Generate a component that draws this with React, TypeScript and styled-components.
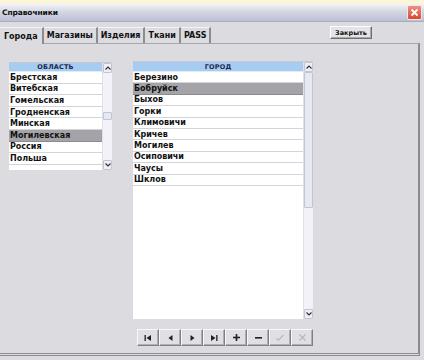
import React, { useState } from 'react'
import styled, { createGlobalStyle } from 'styled-components'

const GlobalStyle = createGlobalStyle`
    html, body {
        margin: 0;
        padding: 0;
        background: #dcdce0;
    }
    * {
        box-sizing: border-box;
    }
`

const regions = ['Брестская', 'Витебская', 'Гомельская', 'Гродненская', 'Минская', 'Могилевская', 'Россия', 'Польша']
const cities = ['Березино', 'Бобруйск', 'Быхов', 'Горки', 'Климовичи', 'Кричев', 'Могилев', 'Осиповичи', 'Чаусы', 'Шклов']
const tabs = ['Города', 'Магазины', 'Изделия', 'Ткани', 'PASS']

const font = `"DejaVu Sans", Verdana, sans-serif`

const Window = styled.div`
    width: 424px;
    height: 360px;
    overflow: hidden;
    background: #dcdce0;
    font-family: ${font};
    display: flex;
    flex-direction: column;
`

const TopStrip = styled.div`
    height: 4px;
    background: #fbf6da;
`

const TitleBar = styled.div`
    height: 18px;
    display: flex;
    align-items: center;
    justify-content: space-between;
    padding: 0 2px 0 2px;
    background: linear-gradient(to bottom, #f4f4f8 0%, #d4d6e2 45%, #bcc0d4 100%);
    border-bottom: 1px solid #a8acbc;
`

const Title = styled.span`
    font-size: 7.5px;
    font-weight: bold;
    color: #101010;
    letter-spacing: -0.1px;
`

const CloseX = styled.div`
    width: 15px;
    height: 15px;
    border-radius: 2px;
    background: linear-gradient(to bottom, #f09080, #d84830);
    border: 1px solid #f0e8e8;
    display: flex;
    align-items: center;
    justify-content: center;
`

const TabBar = styled.div`
    display: flex;
    align-items: flex-end;
    justify-content: space-between;
    height: 21px;
    padding-right: 52px;
`

const Tabs = styled.div`
    display: flex;
    align-items: flex-end;
    height: 100%;
`

const Tab = styled.div<{ $active?: boolean }>`
    height: ${p => (p.$active ? 17 : 16)}px;
    padding: 0 ${p => (p.$active ? 4 : 3)}px;
    font-size: 8px;
    font-weight: bold;
    color: #111;
    display: flex;
    align-items: center;
    background: #dcdce0;
    border-right: 2px solid #8c8c90;
    border-top: 1px solid #f4f4f4;
    ${p => p.$active ? 'margin-bottom: -1px; position: relative; z-index: 1;' : ''}
`

const CloseButton = styled.button`
    width: 42px;
    height: 13px;
    margin-bottom: 4px;
    padding: 0;
    font-family: ${font};
    font-size: 6.5px;
    font-weight: bold;
    color: #111;
    background: #e4e4e8;
    border: 1px solid;
    border-color: #ffffff #707074 #707074 #ffffff;
    box-shadow: inset -1px -1px 0 #a8a8ac;
`

const Panel = styled.div`
    width: 420px;
    height: 313px;
    border-top: 1px solid #a8a8ac;
    border-right: 2px solid #8c8c90;
    border-bottom: 3px double #8c8c90;
    padding: 17px 0 0 9px;
    display: flex;
    align-items: flex-start;
    gap: 21px;
`

const LeftCol = styled.div`
    margin-top: 1px;
`

const RightCol = styled.div`
    display: flex;
    flex-direction: column;
    gap: 10px;
`

const ListBox = styled.div<{ $w: number; $h: number }>`
    width: ${p => p.$w}px;
    height: ${p => p.$h}px;
    background: #ffffff;
    display: flex;
    border-top: 1px solid #c8c8cc;
`

const Rows = styled.div`
    flex: 1;
    display: flex;
    flex-direction: column;
`

const Header = styled.div<{ $h: number }>`
    height: ${p => p.$h}px;
    background: #a6ccf2;
    border-bottom: 1px solid #e0ecf8;
    font-size: 6.5px;
    font-weight: bold;
    color: #1c2850;
    display: flex;
    align-items: center;
    justify-content: center;
    letter-spacing: 0.2px;
`

const Row = styled.div<{ $selected?: boolean; $h: number }>`
    height: ${p => p.$h}px;
    padding-left: 1px;
    font-size: 8px;
    font-weight: bold;
    color: #111;
    display: flex;
    align-items: center;
    background: ${p => (p.$selected ? '#a4a4a8' : '#ffffff')};
    border-bottom: 1px solid ${p => (p.$selected ? '#8c8c90' : '#d4d4d8')};
`

const ScrollBar = styled.div`
    width: 10px;
    display: flex;
    flex-direction: column;
    background: #f2f2f8;
    border-left: 1px solid #e0e0e8;
`

const ArrowBox = styled.div`
    height: 10px;
    display: flex;
    align-items: center;
    justify-content: center;
    background: #eeeef4;
    border: 1px solid #c4c4cc;
    border-radius: 1px;
`

const Track = styled.div`
    flex: 1;
    display: flex;
    flex-direction: column;
`

const Thumb = styled.div<{ $h: number; $top: number }>`
    height: ${p => p.$h}px;
    margin-top: ${p => p.$top}px;
    background: #e6e8f2;
    border: 1px solid #c0c4d4;
    border-radius: 1px;
`

const NavBar = styled.div`
    display: flex;
    justify-content: flex-end;
`

const NavButton = styled.div`
    width: 22px;
    height: 17px;
    display: flex;
    align-items: center;
    justify-content: center;
    background: #e0e0e4;
    border: 1px solid;
    border-color: #f8f8f8 #808084 #808084 #f8f8f8;
    box-shadow: inset -1px -1px 0 #b0b0b4;
`

const Chevron = ({ up }: { up?: boolean }) => (
    <svg width="6" height="4" viewBox="0 0 6 4">
        <path d={up ? 'M0.5 3.5 L3 1 L5.5 3.5' : 'M0.5 0.5 L3 3 L5.5 0.5'} stroke="#303040" strokeWidth="1.2" fill="none" />
    </svg>
)

const ScrollArea = ({ thumbTop, thumbH }: { thumbTop: number; thumbH: number }) => (
    <ScrollBar>
        <ArrowBox><Chevron up /></ArrowBox>
        <Track>
            <Thumb $h={thumbH} $top={thumbTop} />
        </Track>
        <ArrowBox><Chevron /></ArrowBox>
    </ScrollBar>
)

const NavIcon = ({ kind }: { kind: string }) => {
    const c = '#202020'
    const off = '#b8b8bc'
    switch (kind) {
        case 'first':
            return <svg width="8" height="6" viewBox="0 0 8 6"><rect x="0.5" y="0" width="1.3" height="6" fill={c} /><path d="M7 0 L2.5 3 L7 6 Z" fill={c} /></svg>
        case 'prev':
            return <svg width="5" height="6" viewBox="0 0 5 6"><path d="M4.5 0 L0.5 3 L4.5 6 Z" fill={c} /></svg>
        case 'next':
            return <svg width="5" height="6" viewBox="0 0 5 6"><path d="M0.5 0 L4.5 3 L0.5 6 Z" fill={c} /></svg>
        case 'last':
            return <svg width="8" height="6" viewBox="0 0 8 6"><path d="M1 0 L5.5 3 L1 6 Z" fill={c} /><rect x="6.2" y="0" width="1.3" height="6" fill={c} /></svg>
        case 'add':
            return <svg width="7" height="7" viewBox="0 0 7 7"><rect x="2.7" y="0" width="1.6" height="7" fill={c} /><rect x="0" y="2.7" width="7" height="1.6" fill={c} /></svg>
        case 'del':
            return <svg width="7" height="2" viewBox="0 0 7 2"><rect x="0" y="0" width="7" height="1.6" fill={c} /></svg>
        case 'ok':
            return <svg width="8" height="7" viewBox="0 0 8 7"><path d="M0.5 4.5 L2.5 6.2 L7.5 0.8" stroke={off} strokeWidth="1.2" fill="none" /></svg>
        default:
            return <svg width="7" height="7" viewBox="0 0 7 7"><path d="M0.5 0.5 L6.5 6.5 M6.5 0.5 L0.5 6.5" stroke={off} strokeWidth="1.2" /></svg>
    }
}

export default function App() {
    const [activeTab] = useState(0)
    const navKinds = ['first', 'prev', 'next', 'last', 'add', 'del', 'ok', 'cancel']

    return (
        <Window>
            <GlobalStyle />
            <TopStrip />
            <TitleBar>
                <Title>Справочники</Title>
                <CloseX>
                    <svg width="9" height="9" viewBox="0 0 9 9">
                        <path d="M1.5 1.5 L7.5 7.5 M7.5 1.5 L1.5 7.5" stroke="#ffffff" strokeWidth="1.8" />
                    </svg>
                </CloseX>
            </TitleBar>
            <TabBar>
                <Tabs>
                    {tabs.map((t, i) => (
                        <Tab key={t} $active={i === activeTab}>{t}</Tab>
                    ))}
                </Tabs>
                <CloseButton>Закрыть</CloseButton>
            </TabBar>
            <Panel>
                <LeftCol>
                    <ListBox $w={103} $h={108}>
                        <Rows>
                            <Header $h={9}>ОБЛАСТЬ</Header>
                            {regions.map((r, i) => (
                                <Row key={r} $h={11.6} $selected={i === 5}>{r}</Row>
                            ))}
                        </Rows>
                        <ScrollArea thumbTop={39} thumbH={8} />
                    </ListBox>
                </LeftCol>
                <RightCol>
                    <ListBox $w={180} $h={258}>
                        <Rows>
                            <Header $h={10}>ГОРОД</Header>
                            {cities.map((c, i) => (
                                <Row key={c} $h={11.4} $selected={i === 1}>{c}</Row>
                            ))}
                        </Rows>
                        <ScrollArea thumbTop={0} thumbH={136} />
                    </ListBox>
                    <NavBar>
                        {navKinds.map(k => (
                            <NavButton key={k}><NavIcon kind={k} /></NavButton>
                        ))}
                    </NavBar>
                </RightCol>
            </Panel>
        </Window>
    )
}
